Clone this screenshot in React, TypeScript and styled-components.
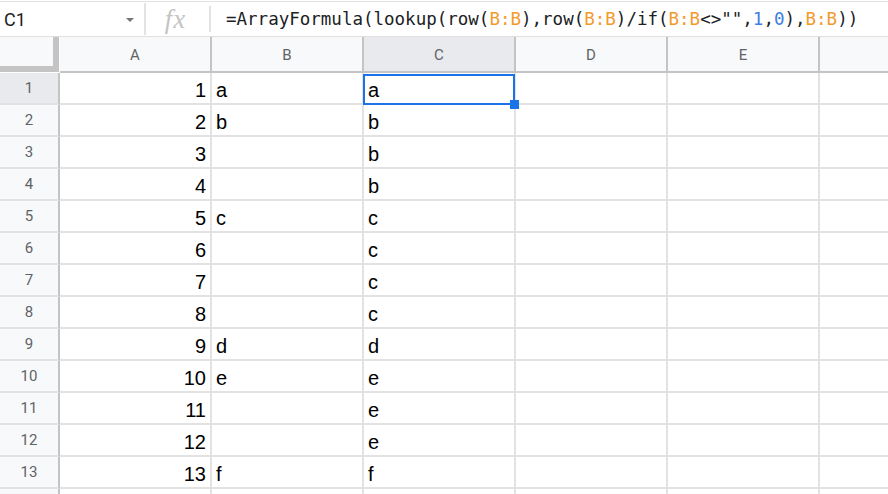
import React from "react";
import styled, { createGlobalStyle } from "styled-components";

const GlobalStyle = createGlobalStyle`
  body {
    margin: 0;
    background: #ffffff;
    overflow: hidden;
    font-family: "Liberation Sans", Arial, sans-serif;
  }
`;

const Page = styled.div`
  width: 888px;
  height: 494px;
  overflow: hidden;
`;

const FormulaBar = styled.div`
  box-sizing: border-box;
  margin-top: 1px;
  height: 36px;
  border-top: 1px solid #e3e3e3;
  border-bottom: 1px solid #e0e0e0;
  display: flex;
  align-items: center;
`;

const NameBox = styled.div`
  width: 144px;
  box-sizing: border-box;
  padding: 0 10px 0 4px;
  display: flex;
  align-items: center;
  justify-content: space-between;
  font-family: Roboto, "Liberation Sans", sans-serif;
  font-size: 18px;
  color: #202124;
`;

const Caret = styled.span`
  width: 0;
  height: 0;
  border-left: 4px solid transparent;
  border-right: 4px solid transparent;
  border-top: 4px solid #757575;
  margin-top: 2px;
`;

const Divider = styled.div<{ $h: number }>`
  width: 2px;
  height: ${(p) => p.$h}px;
  background: #e3e3e3;
`;

const FxIcon = styled.div`
  width: 63px;
  text-align: center;
  font-family: "Liberation Serif", "Times New Roman", serif;
  font-style: italic;
  font-size: 27px;
  color: #c4c4c4;
  letter-spacing: 1px;
  padding-right: 4px;
  box-sizing: border-box;
`;

const Formula = styled.div`
  padding-left: 15px;
  font-family: "DejaVu Sans Mono", "Liberation Mono", monospace;
  font-size: 17.5px;
  color: #202124;
  white-space: nowrap;
`;

const Tok = styled.span<{ $kind?: "range" | "num" }>`
  color: ${(p) =>
    p.$kind === "range" ? "#f39a2c" : p.$kind === "num" ? "#3d7ee0" : "#202124"};
`;

const Sheet = styled.div`
  position: relative;
  display: grid;
  grid-template-columns: 60px repeat(6, 152px);
  grid-template-rows: 36px;
  grid-auto-rows: 32px;
`;

const Corner = styled.div`
  width: 53px;
  height: 29px;
  background: #f8f9fa;
  border-right: 6px solid #c4c4c4;
  border-bottom: 6px solid #c4c4c4;
  margin: 0 1px 1px 0;
`;

const ColHead = styled.div<{ $selected?: boolean }>`
  box-sizing: border-box;
  background: ${(p) => (p.$selected ? "#e8eaed" : "#f8f9fa")};
  border-right: 2px solid #c4c4c4;
  border-bottom: 2px solid #c4c4c4;
  display: flex;
  align-items: center;
  justify-content: center;
  padding-top: 2px;
  font-family: Roboto, "Liberation Sans", sans-serif;
  font-size: 15px;
  color: #5f6368;
`;

const RowHead = styled.div<{ $selected?: boolean }>`
  box-sizing: border-box;
  background: ${(p) => (p.$selected ? "#e8eaed" : "#f8f9fa")};
  border-right: 2px solid #c4c4c4;
  border-bottom: 2px solid #e2e2e2;
  display: flex;
  align-items: center;
  justify-content: center;
  font-family: Roboto, "Liberation Sans", sans-serif;
  font-size: 15px;
  color: #5f6368;
`;

const Cell = styled.div<{ $num?: boolean }>`
  box-sizing: border-box;
  border-right: 2px solid #e2e2e2;
  border-bottom: 2px solid #e2e2e2;
  display: flex;
  align-items: flex-end;
  justify-content: ${(p) => (p.$num ? "flex-end" : "flex-start")};
  padding: 0 4px 1px 4px;
  font-size: 20px;
  color: #000000;
  white-space: nowrap;
  overflow: hidden;
`;

const Selection = styled.div`
  position: absolute;
  left: 363px;
  top: 37px;
  width: 152px;
  height: 31px;
  box-sizing: border-box;
  border: 2px solid #1a73e8;
  pointer-events: none;
`;

const Handle = styled.div`
  position: absolute;
  left: 510px;
  top: 63px;
  width: 9px;
  height: 9px;
  background: #1a73e8;
`;

const colsB = ["a", "b", "", "", "c", "", "", "", "d", "e", "", "", "f", ""];
const colsC = ["a", "b", "b", "b", "c", "c", "c", "c", "d", "e", "e", "e", "f", ""];
const letters = ["A", "B", "C", "D", "E", ""];

const formula: { t: string; k?: "range" | "num" }[] = [
  { t: "=ArrayFormula(lookup(row(" },
  { t: "B:B", k: "range" },
  { t: "),row(" },
  { t: "B:B", k: "range" },
  { t: ")/if(" },
  { t: "B:B", k: "range" },
  { t: '<>"",' },
  { t: "1", k: "num" },
  { t: "," },
  { t: "0", k: "num" },
  { t: ")," },
  { t: "B:B", k: "range" },
  { t: "))" },
];

const App = () => {
  return (
    <Page>
      <GlobalStyle />
      <FormulaBar>
        <NameBox>
          C1
          <Caret />
        </NameBox>
        <Divider $h={32} />
        <FxIcon>fx</FxIcon>
        <Divider $h={26} />
        <Formula>
          {formula.map((f, i) => (
            <Tok key={i} $kind={f.k}>
              {f.t}
            </Tok>
          ))}
        </Formula>
      </FormulaBar>
      <Sheet>
        <Corner />
        {letters.map((l, i) => (
          <ColHead key={i} $selected={l === "C"}>
            {l}
          </ColHead>
        ))}
        {colsC.map((c, r) => (
          <React.Fragment key={r}>
            <RowHead $selected={r === 0}>{r < 13 ? r + 1 : ""}</RowHead>
            <Cell $num>{r < 13 ? r + 1 : ""}</Cell>
            <Cell>{colsB[r]}</Cell>
            <Cell>{c}</Cell>
            <Cell />
            <Cell />
            <Cell />
          </React.Fragment>
        ))}
        <Selection />
        <Handle />
      </Sheet>
    </Page>
  );
};

export default App;
